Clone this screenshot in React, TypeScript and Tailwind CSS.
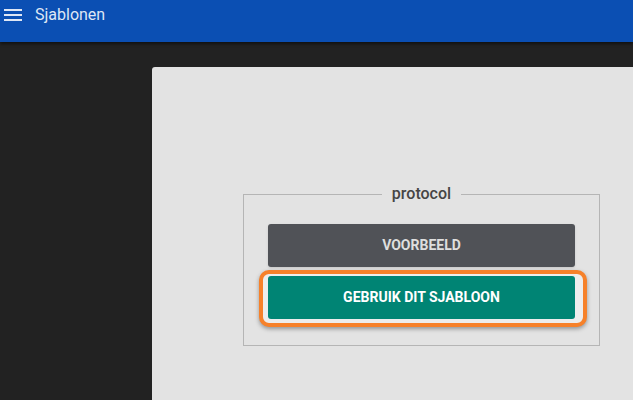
import React from 'react';

const MenuIcon: React.FC = () => (
    <svg width="18" height="14" viewBox="0 0 18 14" className="shrink-0">
        <rect x="0" y="1" width="18" height="2" fill="#dfe7f5" />
        <rect x="0" y="6" width="18" height="2" fill="#dfe7f5" />
        <rect x="0" y="11" width="18" height="2" fill="#dfe7f5" />
    </svg>
);

export default function App() {
    return (
        <div className="w-[633px] h-[400px] bg-[#222222] overflow-hidden flex flex-col font-['Roboto',sans-serif]">
            <header className="h-[42px] shrink-0 bg-[#0b4fb3] flex items-start pt-[5px] pl-[4px] gap-[13px] shadow-[0_2px_3px_rgba(0,0,0,0.5)] relative z-10">
                <div className="h-[20px] flex items-center">
                    <MenuIcon />
                </div>
                <span className="text-[16px] leading-[20px] text-[#dfe7f5]">Sjablonen</span>
            </header>
            <main className="flex-1 flex pl-[152px] pt-[25px]">
                <div className="flex-1 bg-[#e3e3e3] rounded-tl-[3px] pl-[91px] pt-[117px]">
                    <fieldset className="w-[357px] border border-[#b5b5b5] px-[24px] pb-[26px] pt-[20px]">
                        <legend className="mx-auto px-[10px] text-[16px] font-medium text-[#454545] leading-[20px]">
                            protocol
                        </legend>
                        <div className="flex flex-col gap-[9px]">
                            <button className="h-[43px] w-full rounded-[3px] bg-[#505257] text-[#dedede] text-[14px] font-bold shadow-sm">
                                VOORBEELD
                            </button>
                            <div className="relative">
                                <div className="absolute -left-[9px] -right-[12px] -top-[6px] -bottom-[8px] rounded-[10px] border-4 border-[#f6812a] bg-[#ededed] shadow-[0_2px_4px_rgba(0,0,0,0.35)]" />
                                <button className="relative h-[43px] w-full rounded-[3px] bg-[#008474] text-white text-[14px] font-bold">
                                    GEBRUIK DIT SJABLOON
                                </button>
                            </div>
                        </div>
                    </fieldset>
                </div>
            </main>
        </div>
    );
}
